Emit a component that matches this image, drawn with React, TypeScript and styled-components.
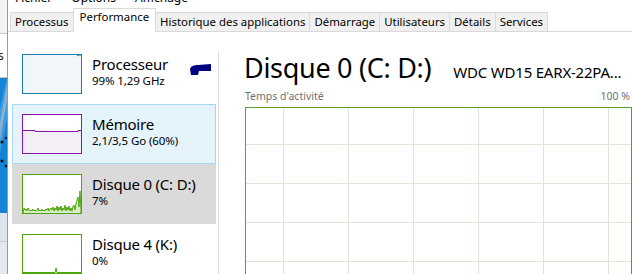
import React from "react";
import styled, { createGlobalStyle } from "styled-components";

const Global = createGlobalStyle`
  html, body { margin: 0; padding: 0; background: #fff; }
  body { font-family: "Noto Sans", "Open Sans", sans-serif; color: #000; }
`;

const Screen = styled.div`
  width: 632px;
  height: 274px;
  overflow: hidden;
  display: flex;
  background: #fff;
`;

const Desktop = styled.div`
  width: 7px;
  flex: none;
  display: flex;
  flex-direction: column;
`;

const DeskPiece = styled.div<{ $h: number; $bg: string; $line?: boolean }>`
  height: ${(p) => p.$h}px;
  flex: none;
  background: ${(p) => p.$bg};
  border-bottom: ${(p) => (p.$line ? "1px solid #c8c8c8" : "none")};
  overflow: hidden;
  font-size: 12px;
  line-height: 12px;
  color: #222;
`;

const DeskText = styled.span`
  display: block;
  margin: 16px 0 0 -2px;
`;

const Window = styled.div`
  flex: 1;
  display: flex;
  flex-direction: column;
  border-left: 1px solid #9a9a9a;
  min-width: 0;
`;

const MenuBar = styled.div`
  height: 7px;
  overflow: hidden;
  display: flex;
  gap: 19px;
  padding-left: 7px;
  font-size: 12px;
  line-height: 16px;
  background: #fff;
`;

const MenuItem = styled.span`
  margin-top: -10px;
`;

const TabStrip = styled.div`
  height: 24px;
  display: flex;
  align-items: flex-end;
  padding-left: 2px;
  border-bottom: 1px solid #d9d9d9;
  background: #fff;
`;

const Tab = styled.div<{ $active?: boolean }>`
  box-sizing: border-box;
  height: ${(p) => (p.$active ? 24 : 19)}px;
  margin-bottom: ${(p) => (p.$active ? -1 : 0)}px;
  margin-left: -1px;
  padding: ${(p) => (p.$active ? "0 6px" : "1px 4px 0")};
  border: 1px solid #d9d9d9;
  border-bottom-width: 0;
  background: ${(p) => (p.$active ? "#fff" : "#f0f0f0")};
  font-size: 11.4px;
  line-height: 16px;
  white-space: nowrap;
  position: relative;
  z-index: ${(p) => (p.$active ? 2 : 1)};
  &:first-child { margin-left: 0; }
`;

const Body = styled.div`
  flex: 1;
  display: flex;
  min-height: 0;
`;

const Sidebar = styled.div`
  width: 210px;
  flex: none;
  display: flex;
  flex-direction: column;
  padding: 12px 0 0 4px;
  box-sizing: border-box;
`;

const Divider = styled.div`
  width: 1px;
  flex: none;
  margin-top: 20px;
  background: #d9d9d9;
`;

type ItemState = "normal" | "selected" | "hover";

const Item = styled.div<{ $state: ItemState }>`
  box-sizing: border-box;
  width: 204px;
  height: 60px;
  flex: none;
  display: flex;
  align-items: flex-start;
  padding: 9px 0 0 9px;
  gap: 10px;
  position: relative;
  background: ${(p) =>
    p.$state === "selected" ? "#e5f3fb" : p.$state === "hover" ? "#dadada" : "transparent"};
  border: 1px solid ${(p) => (p.$state === "selected" ? "#a6d6f1" : "transparent")};
`;

const Thumb = styled.div<{ $color: string; $fill: string }>`
  box-sizing: border-box;
  width: 60px;
  height: 40px;
  flex: none;
  border: 1px solid ${(p) => p.$color};
  background: ${(p) => p.$fill};
  display: flex;
  overflow: hidden;
`;

const ThumbSvg = styled.svg`
  width: 58px;
  height: 38px;
  display: block;
`;

const ItemText = styled.div`
  display: flex;
  flex-direction: column;
  padding-top: 1px;
`;

const ItemTitle = styled.div`
  font-size: 15px;
  line-height: 18px;
  letter-spacing: -0.2px;
`;

const ItemSub = styled.div`
  font-size: 11.5px;
  line-height: 15px;
  letter-spacing: -0.1px;
`;

const Blob = styled.svg`
  position: absolute;
  left: 177px;
  top: 19px;
  width: 22px;
  height: 12px;
`;

const Main = styled.div`
  flex: 1;
  display: flex;
  flex-direction: column;
  padding: 18px 0 0 25px;
  min-width: 0;
`;

const HeadRow = styled.div`
  display: flex;
  align-items: baseline;
  gap: 22px;
  white-space: nowrap;
  height: 36px;
`;

const Title = styled.div`
  font-size: 27px;
  line-height: 36px;
  letter-spacing: -0.3px;
`;

const Model = styled.div`
  font-size: 15px;
  letter-spacing: -0.2px;
`;

const GraphLabels = styled.div`
  display: flex;
  justify-content: space-between;
  font-size: 10.5px;
  line-height: 14px;
  color: #707070;
  margin-top: 3px;
  padding-left: 1px;
  padding-right: 2px;
`;

const Graph = styled.div`
  margin-top: 4px;
  margin-left: 1px;
  height: 200px;
  flex: none;
  box-sizing: border-box;
  border: 1.5px solid #5d9b2c;
  background-color: #fff;
  background-image: linear-gradient(to right, #e1e5d8 1px, transparent 1px),
    linear-gradient(to bottom, #e1e5d8 1px, transparent 1px);
  background-size: 65px 39px;
  background-position: 37px 36px;
`;

const tabs = [
  "Processus",
  "Performance",
  "Historique des applications",
  "Démarrage",
  "Utilisateurs",
  "Détails",
  "Services",
];

const diskPts =
  "0,38 1,33 2,35 3,34 4,36 5,33 6,35 7,36 8,35 9,36 10,34 11,36 12,35 13,36 14,35 15,33 16,36 17,35 18,36 19,34 20,36 21,35 22,36 23,34 24,35 25,33 26,36 27,34 28,33 29,35 30,32 31,36 32,33 33,35 34,31 35,36 36,32 37,35 38,31 39,36 40,33 41,35 42,30 43,36 44,32 45,35 46,31 47,36 48,33 49,36 50,31 51,30 52,35 53,29 54,25 55,22 56,32 57,16 58,36 58,38";

export default function App() {
  return (
    <>
      <Global />
      <Screen>
        <Desktop>
          <DeskPiece $h={33} $bg="#f4f4f4" $line />
          <DeskPiece $h={43} $bg="#ffffff" $line>
            <DeskText>s</DeskText>
          </DeskPiece>
          <DeskPiece $h={135} $bg="#1583d6">
            <svg width="7" height="135" viewBox="0 0 7 135">
              <rect width="7" height="135" fill="#1583d6" />
              <polygon points="7,0 7,40 0,75 0,30" fill="#3d9be0" />
              <polygon points="7,5 7,22 0,62 0,45" fill="#9fb7c9" opacity="0.8" />
              <circle cx="2" cy="64" r="1.6" fill="#111" />
              <circle cx="6" cy="60" r="1.2" fill="#111" />
              <circle cx="2" cy="83" r="1.6" fill="#111" />
              <circle cx="6" cy="88" r="1.4" fill="#111" />
            </svg>
          </DeskPiece>
          <DeskPiece $h={28} $bg="#dde4ee" $line />
          <DeskPiece $h={40} $bg="#e4e7ec" />
        </Desktop>
        <Window>
          <MenuBar>
            <MenuItem>Fichier</MenuItem>
            <MenuItem>Options</MenuItem>
            <MenuItem>Affichage</MenuItem>
          </MenuBar>
          <TabStrip>
            {tabs.map((t) => (
              <Tab key={t} $active={t === "Performance"}>
                {t}
              </Tab>
            ))}
          </TabStrip>
          <Body>
            <Sidebar>
              <Item $state="normal">
                <Thumb $color="#1a7db5" $fill="#f1f6fa">
                  <ThumbSvg viewBox="0 0 58 38">
                    <polyline points="54,1 56,0 58,0" fill="none" stroke="#1a7db5" strokeWidth="1" />
                  </ThumbSvg>
                </Thumb>
                <ItemText>
                  <ItemTitle>Processeur</ItemTitle>
                  <ItemSub>99% 1,29 GHz</ItemSub>
                </ItemText>
                <Blob viewBox="0 0 22 12">
                  <path d="M0 5 C1 2 4 1 8 1 L21 0 L21 7 L9 7 L8 11 L1 11 Z" fill="#000080" />
                </Blob>
              </Item>
              <Item $state="selected">
                <Thumb $color="#8b12ae" $fill="#fff">
                  <ThumbSvg viewBox="0 0 58 38">
                    <polygon points="0,15.5 12,15.5 12,16.5 55,16.5 55,15.5 58,15.5 58,38 0,38" fill="#f4eff6" />
                    <polyline points="0,15.5 12,15.5 12,16.5 55,16.5 55,15.5 58,15.5" fill="none" stroke="#8b12ae" strokeWidth="1" />
                  </ThumbSvg>
                </Thumb>
                <ItemText>
                  <ItemTitle>Mémoire</ItemTitle>
                  <ItemSub>2,1/3,5 Go (60%)</ItemSub>
                </ItemText>
              </Item>
              <Item $state="hover">
                <Thumb $color="#4da60c" $fill="#fff">
                  <ThumbSvg viewBox="0 0 58 38">
                    <polygon points={diskPts} fill="#d6ecc4" />
                    <polyline points={diskPts} fill="none" stroke="#4da60c" strokeWidth="1" />
                  </ThumbSvg>
                </Thumb>
                <ItemText>
                  <ItemTitle>Disque 0 (C: D:)</ItemTitle>
                  <ItemSub>7%</ItemSub>
                </ItemText>
              </Item>
              <Item $state="normal">
                <Thumb $color="#4da60c" $fill="#fff">
                  <ThumbSvg viewBox="0 0 58 38">
                    <polyline points="0,37.5 32,37.5 33,33 34,37.5 58,37.5" fill="#d6ecc4" stroke="#4da60c" strokeWidth="1" />
                  </ThumbSvg>
                </Thumb>
                <ItemText>
                  <ItemTitle>Disque 4 (K:)</ItemTitle>
                  <ItemSub>0%</ItemSub>
                </ItemText>
              </Item>
            </Sidebar>
            <Divider />
            <Main>
              <HeadRow>
                <Title>Disque 0 (C: D:)</Title>
                <Model>WDC WD15 EARX-22PA...</Model>
              </HeadRow>
              <GraphLabels>
                <span>Temps d'activité</span>
                <span>100 %</span>
              </GraphLabels>
              <Graph />
            </Main>
          </Body>
        </Window>
      </Screen>
    </>
  );
}
